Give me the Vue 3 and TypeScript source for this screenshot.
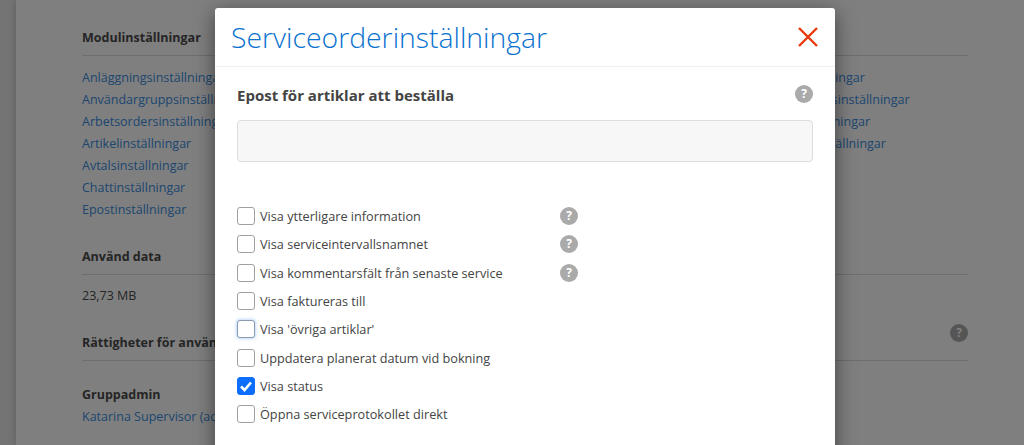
<script setup lang="ts">
const leftLinks: string[] = [
  'Anläggningsinställningar',
  'Användargruppsinställningar',
  'Arbetsordersinställningar',
  'Artikelinställningar',
  'Avtalsinställningar',
  'Chattinställningar',
  'Epostinställningar',
]
const rightLinks: string[] = [
  'Rapportinställningar',
  'Servicerapportsinställningar',
  'Kalenderinställningar',
  'Tidrapportsinställningar',
]
interface Option { label: string; help?: boolean; checked?: boolean; focus?: boolean }
const options: Option[] = [
  { label: 'Visa ytterligare information', help: true },
  { label: 'Visa serviceintervallsnamnet', help: true },
  { label: 'Visa kommentarsfält från senaste service', help: true },
  { label: 'Visa faktureras till' },
  { label: "Visa 'övriga artiklar'", focus: true },
  { label: 'Uppdatera planerat datum vid bokning' },
  { label: 'Visa status', checked: true },
  { label: 'Öppna serviceprotokollet direkt' },
]
</script>

<template>
  <div class="page">
    <main class="card">
      <section class="modules">
        <h3 class="head">Modulinställningar</h3>
        <div class="cols">
          <ul class="links">
            <li v-for="l in leftLinks" :key="l"><a>{{ l }}</a></li>
          </ul>
          <ul class="links right">
            <li v-for="(l, i) in rightLinks" :key="i"><a>{{ l }}</a></li>
          </ul>
        </div>
      </section>
      <section class="data">
        <h3 class="head">Använd data</h3>
        <p class="value">23,73 MB</p>
      </section>
      <section class="rights">
        <h3 class="head">Rättigheter för användare</h3>
        <span class="help">?</span>
      </section>
      <section class="admin">
        <h3 class="plain">Gruppadmin</h3>
        <a class="adminlink">Katarina Supervisor (admin)</a>
      </section>
    </main>

    <div class="overlay"></div>

    <div class="modal">
      <header class="modal-head">
        <h2>Serviceorderinställningar</h2>
        <svg class="close" width="20" height="20" viewBox="0 0 20 20">
          <path d="M1 1 L19 19 M19 1 L1 19" stroke="#e8380d" stroke-width="2.4" fill="none" />
        </svg>
      </header>
      <div class="modal-body">
        <div class="title-row">
          <h4>Epost för artiklar att beställa</h4>
          <span class="help">?</span>
        </div>
        <div class="fake-input"></div>
        <div class="options">
          <div v-for="o in options" :key="o.label" class="opt">
            <span class="box" :class="{ checked: o.checked, focus: o.focus }">
              <svg v-if="o.checked" width="14" height="14" viewBox="0 0 14 14">
                <path d="M2 7.5 L5.5 11 L12 3.5" stroke="#fff" stroke-width="2.6" fill="none" />
              </svg>
            </span>
            <span class="lbl">{{ o.label }}</span>
            <span v-if="o.help" class="help">?</span>
          </div>
        </div>
      </div>
    </div>
  </div>
</template>

<style>
html, body { margin: 0; padding: 0; overflow: hidden; }
</style>

<style scoped>
.page {
  position: relative;
  width: 1024px;
  height: 445px;
  overflow: hidden;
  background: #e8e8e8;
  font-family: "Open Sans", "Liberation Sans", sans-serif;
  font-size: 12.5px;
  color: #4a4a4a;
}
.card {
  margin: 0 0 0 16px;
  height: 445px;
  background: #fff;
  padding: 28px 56px 0 66px;
  box-sizing: border-box;
  box-shadow: 0 0 8px rgba(0,0,0,.2);
}
ul { list-style: none; margin: 0; padding: 0; }
h3 { margin: 0; font-size: 12.5px; font-weight: 700; color: #4a4a4a; line-height: 18px; }
.head { line-height: 20px; padding-bottom: 7px; border-bottom: 1px solid #ddd; }
.cols { display: flex; padding-top: 11px; }
.links { width: 664px; }
.links.right { width: auto; }
.links li { line-height: 22px; height: 22px; }
a { color: #3a8ee0; }
.data { margin-top: 26px; }
.value { margin: 0; padding-top: 12px; line-height: 18px; }
.rights { position: relative; margin-top: 28px; }
.rights .help { position: absolute; right: 0; top: -9px; }
.admin { margin-top: 25px; }
.plain { line-height: 18px; }
.adminlink { display: block; line-height: 22px; margin-top: 2px; }
.overlay { position: absolute; inset: 0; background: rgba(0,0,0,.5); }
.modal {
  position: absolute;
  left: 215px;
  top: 8px;
  width: 620px;
  height: 470px;
  background: #fff;
  border-radius: 3px;
  box-shadow: 0 5px 20px rgba(0,0,0,.5);
}
.modal-head {
  display: flex;
  align-items: center;
  justify-content: space-between;
  height: 58px;
  padding: 0 17px 0 16px;
  border-bottom: 1px solid #f0f0f0;
}
.modal-head h2 { margin: 0; font-size: 28.35px; font-weight: 300; color: #0a72cf; line-height: 58px; }
.close { display: block; }
.modal-body { padding: 0 22px; }
.title-row { display: flex; align-items: center; justify-content: space-between; padding-top: 16px; height: 24px; }
.title-row h4 { margin: 0; font-size: 15px; font-weight: 700; color: #444; }
.title-row .help { margin-bottom: 2px; }
.fake-input {
  height: 40px;
  margin-top: 13px;
  background: #f7f7f7;
  border: 1px solid #ddd;
  border-radius: 4px;
}
.options { margin-top: 40px; display: flex; flex-direction: column; }
.opt { display: flex; align-items: center; height: 28.3px; }
.box {
  flex: none;
  box-sizing: border-box;
  width: 18px;
  height: 18px;
  border: 1px solid #a0a0a0;
  border-radius: 3px;
  background: #fff;
  display: flex;
  align-items: center;
  justify-content: center;
}
.box.checked { background: #0d6efd; border-color: #0d6efd; }
.box.focus { border-color: #8a9bb0; box-shadow: 0 0 3px 1px rgba(13,110,253,.25); }
.lbl { margin-left: 5px; width: 300px; font-size: 12.7px; color: #444; white-space: nowrap; }
.help {
  flex: none;
  display: inline-flex;
  align-items: center;
  justify-content: center;
  width: 18px;
  height: 18px;
  border-radius: 50%;
  background: #aaa;
  color: #fff;
  font-size: 12px;
  font-weight: 700;
  line-height: 18px;
}
</style>
